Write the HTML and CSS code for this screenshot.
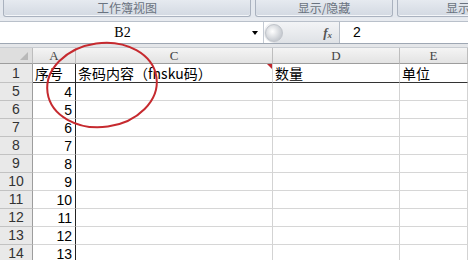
FILE: index.html
```html
<!DOCTYPE html>
<html>
<head>
<meta charset="utf-8">
<link rel="stylesheet" href="styles.css">
</head>
<body>
<div class="app">
  <div class="ribbon">
    <div class="group g1">工作簿视图</div>
    <div class="group g2">显示/隐藏</div>
    <div class="group g3">显示比例</div>
  </div>
  <div class="strip"></div>
  <div class="fbar">
    <div class="namebox">
      <span class="name">B2</span>
      <span class="dd"></span>
    </div>
    <div class="fxpart">
      <span class="knob"></span>
      <span class="fx">f<sub>x</sub></span>
    </div>
    <div class="formula">2</div>
  </div>
  <div class="gap"></div>
  <div class="sheet">
    <div class="ch corner"><span class="tri"></span></div>
    <div class="ch">A</div>
    <div class="ch">C</div>
    <div class="ch">D</div>
    <div class="ch">E</div>

    <div class="rh r1">1</div>
    <div class="c ca r1 cn">序号</div>
    <div class="c r1 cn cmt">条码内容<span class="lat">（fnsku</span>码）</div>
    <div class="c r1 cn">数量</div>
    <div class="c r1 cn">单位</div>

    <div class="rh">5</div><div class="c ca num">4</div><div class="c"></div><div class="c"></div><div class="c"></div>
    <div class="rh">6</div><div class="c ca num">5</div><div class="c"></div><div class="c"></div><div class="c"></div>
    <div class="rh">7</div><div class="c ca num">6</div><div class="c"></div><div class="c"></div><div class="c"></div>
    <div class="rh">8</div><div class="c ca num">7</div><div class="c"></div><div class="c"></div><div class="c"></div>
    <div class="rh">9</div><div class="c ca num">8</div><div class="c"></div><div class="c"></div><div class="c"></div>
    <div class="rh">10</div><div class="c ca num">9</div><div class="c"></div><div class="c"></div><div class="c"></div>
    <div class="rh">11</div><div class="c ca num">10</div><div class="c"></div><div class="c"></div><div class="c"></div>
    <div class="rh">12</div><div class="c ca num">11</div><div class="c"></div><div class="c"></div><div class="c"></div>
    <div class="rh">13</div><div class="c ca num">12</div><div class="c"></div><div class="c"></div><div class="c"></div>
    <div class="rh">14</div><div class="c ca num">13</div><div class="c"></div><div class="c"></div><div class="c"></div>
  </div>
  <svg class="circle" width="468" height="260" viewBox="0 0 468 260">
    <ellipse cx="102" cy="85" rx="55" ry="42" transform="rotate(-8 102 85)" fill="none" stroke="#c62a2f" stroke-width="2"/>
  </svg>
</div>
</body>
</html>
```
FILE: styles.css
```css
html, body {
  margin: 0;
  padding: 0;
  background: #ffffff;
  overflow: hidden;
}
.app {
  position: relative;
  width: 468px;
  height: 260px;
  overflow: hidden;
  font-family: "Noto Sans CJK SC", sans-serif;
}
.ribbon {
  display: flex;
  height: 18px;
  background: #e4e8ee;
  padding-left: 3px;
  gap: 4px;
}
.group {
  flex-shrink: 0;
  height: 17px;
  box-sizing: border-box;
  border: 1px solid #aab2bf;
  border-top: none;
  border-radius: 0 0 3px 3px;
  background: linear-gradient(#e6eaf0, #d3d9e2);
  color: #6a7380;
  font-size: 12px;
  line-height: 16px;
  text-align: center;
  box-shadow: inset 0 -1px 0 #f4f6f9;
  white-space: nowrap;
}
.g1 { width: 248px; }
.g2 { width: 138px; }
.g3 { width: 140px; text-align: left; padding-left: 48px; }
.strip {
  height: 3px;
  background: #e8ebf0;
}
.fbar {
  display: flex;
  height: 23px;
  box-sizing: border-box;
  border-top: 1px solid #b9c0ca;
  border-bottom: 1px solid #9ea7b3;
  background: #fff;
}
.namebox {
  width: 263px;
  position: relative;
  display: flex;
  align-items: center;
  justify-content: center;
  border-right: 1px solid #c4cad3;
}
.name {
  font-family: "Liberation Serif", serif;
  font-size: 14px;
  color: #000;
  margin-right: 18px;
}
.dd {
  position: absolute;
  right: 5px;
  top: 9px;
  width: 0;
  height: 0;
  border-left: 3px solid transparent;
  border-right: 3px solid transparent;
  border-top: 4px solid #000;
}
.fxpart {
  width: 76px;
  display: flex;
  align-items: center;
  justify-content: space-between;
  box-sizing: border-box;
  border-right: 1px solid #b6bdc7;
  background: linear-gradient(#f3f4f6, #dfe2e6);
  border-radius: 10px 0 0 10px;
}
.knob {
  width: 16px;
  height: 16px;
  margin-left: 1px;
  border-radius: 50%;
  background: radial-gradient(circle at 40% 40%, #ffffff, #c7cbd1 70%);
  border: 1px solid #c0c4ca;
}
.fx {
  font-family: "Liberation Serif", serif;
  font-style: italic;
  font-weight: bold;
  font-size: 13px;
  color: #555;
  margin-right: 7px;
}
.fx sub {
  font-size: 9px;
  vertical-align: -1px;
}
.formula {
  flex: 1;
  padding-left: 13px;
  font-family: "Liberation Sans", sans-serif;
  font-size: 14px;
  line-height: 21px;
  color: #000;
}
.gap {
  height: 3px;
  background: #e4e6e9;
  border-bottom: 1px solid #c8ccd1;
}
.sheet {
  display: grid;
  grid-template-columns: 33px 43px 197px 127px 68px;
  grid-template-rows: 16px 19px repeat(10, 18px);
}
.ch {
  box-sizing: border-box;
  background: linear-gradient(#f4f4f4, #e3e3e3);
  border-right: 1px solid #bdbdbd;
  border-bottom: 1px solid #9d9d9d;
  font-family: "Liberation Serif", serif;
  font-size: 13px;
  line-height: 15px;
  color: #444;
  text-align: center;
}
.corner {
  position: relative;
  background: #dedede;
}
.tri {
  position: absolute;
  right: 4px;
  bottom: 3px;
  width: 0;
  height: 0;
  border-left: 8px solid transparent;
  border-bottom: 8px solid #b8b8b8;
}
.rh {
  box-sizing: border-box;
  background: #e9e9e9;
  border-right: 1px solid #9d9d9d;
  border-bottom: 1px solid #c2c2c2;
  font-family: "Liberation Sans", sans-serif;
  font-size: 14px;
  line-height: 17px;
  color: #333;
  text-align: center;
}
.rh.r1 { line-height: 19px; }
.c {
  box-sizing: border-box;
  border-right: 1px solid #d3d3d3;
  border-bottom: 1px solid #d6d6d6;
  font-size: 14px;
  color: #000;
  white-space: nowrap;
  overflow: visible;
}
.c.ca { border-right: 1px solid #222; }
.c.r1 { border-bottom: 1px solid #333; }
.cn {
  padding-left: 2px;
  line-height: 18px;
}
.lat {
  font-family: "Noto Sans CJK SC", sans-serif;
}
.cmt { position: relative; }
.cmt::after {
  content: "";
  position: absolute;
  right: 0;
  top: 0;
  border-left: 5px solid transparent;
  border-top: 5px solid #c0272d;
}
.num {
  font-family: "Liberation Sans", sans-serif;
  text-align: right;
  padding-right: 3px;
  line-height: 18px;
}
.circle {
  position: absolute;
  left: 0;
  top: 0;
  pointer-events: none;
}
```
